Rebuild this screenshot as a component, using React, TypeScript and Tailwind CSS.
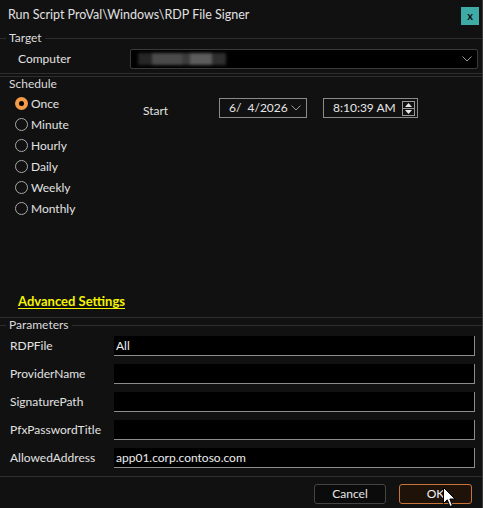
import React from "react";

const font = { fontFamily: 'Lato, "Noto Sans", sans-serif' };

const schedules = ["Once", "Minute", "Hourly", "Daily", "Weekly", "Monthly"];

const params: { label: string; value: string }[] = [
  { label: "RDPFile", value: "All" },
  { label: "ProviderName", value: "" },
  { label: "SignaturePath", value: "" },
  { label: "PfxPasswordTitle", value: "" },
  { label: "AllowedAddress", value: "app01.corp.contoso.com" },
];

// group box caption with the frame line running through it
function GroupHeader({ title, className = "" }: { title: string; className?: string }) {
  return (
    <div className={`flex items-center ${className}`}>
      <div className="w-[6px] h-px bg-[#2e2e2e]" />
      <span className="px-[3px] text-[12px] leading-none text-[#dcdcdc]">{title}</span>
      <div className="flex-1 h-px bg-[#2e2e2e]" />
    </div>
  );
}

// flat combo box arrow
function Chevron({ className = "" }: { className?: string }) {
  return (
    <svg className={className} width="10" height="6" viewBox="0 0 10 6">
      <path d="M0.5 0.5 L5 5 L9.5 0.5" fill="none" stroke="#9c9c9c" strokeWidth="1" />
    </svg>
  );
}

function Radio({ label, checked }: { label: string; checked?: boolean }) {
  return (
    <div className="h-[21px] flex items-center gap-[3px]">
      {checked ? (
        <span className="w-[13px] h-[13px] rounded-full bg-[#f29b48] flex items-center justify-center">
          <span className="w-[5px] h-[5px] rounded-full bg-black" />
        </span>
      ) : (
        <span className="w-[13px] h-[13px] rounded-full border border-[#a8a8a8]" />
      )}
      <span className="text-[12px] text-[#e2e2e2]">{label}</span>
    </div>
  );
}

function Spinner() {
  return (
    <div className="w-[13px] h-[15px] border border-[#9a9a9a] flex flex-col">
      <div className="flex-1 flex items-center justify-center border-b border-[#9a9a9a]">
        <svg width="7" height="4" viewBox="0 0 7 4">
          <path d="M0 4 L3.5 0 L7 4 Z" fill="#e6e6e6" />
        </svg>
      </div>
      <div className="flex-1 flex items-center justify-center">
        <svg width="7" height="4" viewBox="0 0 7 4">
          <path d="M0 0 L3.5 4 L7 0 Z" fill="#e6e6e6" />
        </svg>
      </div>
    </div>
  );
}

function Cursor() {
  return (
    <svg
      className="absolute left-[443px] top-[487px]"
      width="13"
      height="21"
      viewBox="0 0 13 21"
    >
      <path
        d="M0.5 0.5 L0.5 16.5 L4.3 12.8 L7 19.5 L9.4 18.5 L6.8 12 L12 12 Z"
        fill="#ffffff"
        stroke="#000000"
        strokeWidth="1"
        strokeLinejoin="round"
      />
    </svg>
  );
}

export default function App() {
  return (
    <div className="w-[486px] h-[508px] bg-white relative" style={font}>
      <div className="w-[483px] h-[508px] bg-[#111111] border-r border-[#3c3c3c] flex flex-col">
        {/* title bar */}
        <div className="h-[31px] flex items-center justify-between pl-[8px] pr-[3px] shrink-0">
          <span className="text-[12.5px] text-[#e0e0e0]">Run Script ProVal\Windows\RDP File Signer</span>
          <button className="w-[18px] h-[18px] bg-[#3eaba7] flex items-center justify-center text-[11px] font-bold text-[#111] leading-none">
            x
          </button>
        </div>

        {/* target */}
        <GroupHeader title="Target" className="h-[14px]" />
        <div className="mt-[4px] h-[20px] flex items-center">
          <span className="w-[130px] pl-[18px] text-[12px] text-[#e2e2e2]">Computer</span>
          <div className="relative w-[348px] h-[20px] bg-black border border-[#3a3a3a] rounded-[2px] flex items-center">
            <div className="flex items-center h-[12px] ml-[7px] blur-[1.5px]">
              <div className="w-[14px] h-full bg-[#262626]" />
              <div className="w-[30px] h-full bg-[#4a4a4a]" />
              <div className="w-[8px] h-full bg-[#3b3b3b]" />
              <div className="w-[22px] h-full bg-[#5c5c5c]" />
              <div className="w-[14px] h-full bg-[#2e2e2e]" />
            </div>
            <Chevron className="absolute right-[5px]" />
          </div>
        </div>
        <div className="mt-[4px] h-px bg-[#2e2e2e]" />
        <div className="mt-[2px] h-px bg-[#2e2e2e]" />

        {/* schedule */}
        <div className="h-[13px] flex items-center pl-[9px]">
          <span className="text-[12px] leading-none text-[#dcdcdc]">Schedule</span>
        </div>
        <div className="flex flex-col h-[228px] border-b border-[#2e2e2e]">
          <div className="flex">
            <div className="pl-[15px] pt-[3px] w-[143px] flex flex-col">
              {schedules.map((s, i) => (
                <Radio key={s} label={s} checked={i === 0} />
              ))}
            </div>
            <div className="flex items-start pt-[8px]">
              <span className="w-[76px] pt-[4px] text-[12px] text-[#e2e2e2]">Start</span>
              <div className="w-[88px] h-[20px] border border-[#8a8a8a] flex items-center justify-between pl-[9px] pr-[5px]">
                <span className="text-[12px] text-[#e6e6e6] whitespace-pre">6/  4/2026</span>
                <Chevron />
              </div>
              <div className="ml-[16px] w-[95px] h-[20px] border border-[#8a8a8a] flex items-center justify-between pl-[9px] pr-[2px]">
                <span className="text-[12px] text-[#e6e6e6]">8:10:39 AM</span>
                <Spinner />
              </div>
            </div>
          </div>
          <div className="flex-1" />
          <div className="pl-[18px] pb-[5px]">
            <a className="text-[13px] font-bold text-[#f4f400] underline underline-offset-2">Advanced Settings</a>
          </div>
        </div>

        {/* parameters */}
        <GroupHeader title="Parameters" className="h-[14px]" />
        <div className="flex flex-col gap-[8px] mt-[4px]">
          {params.map((p) => (
            <div key={p.label} className="flex items-center h-[20px]">
              <span className="w-[114px] pl-[10px] text-[12px] text-[#e2e2e2]">{p.label}</span>
              <div className="w-[361px] h-[20px] bg-black border-b border-r border-[#8c8c8c] flex items-center px-[2px]">
                <span className="text-[12px] text-[#ededed]">{p.value}</span>
              </div>
            </div>
          ))}
        </div>
        <div className="mt-[8px] h-px bg-[#2e2e2e]" />

        {/* footer */}
        <div className="flex justify-end gap-[13px] pr-[10px] pt-[7px]">
          <button className="w-[72px] h-[20px] rounded-[3px] border border-[#444] bg-[#0b0b0b] text-[12px] text-[#e6e6e6]">
            Cancel
          </button>
          <button className="w-[73px] h-[20px] rounded-[3px] border border-[#c9753a] bg-[#1f1309] text-[12px] text-[#f0f0f0]">
            OK
          </button>
        </div>
      </div>
      <Cursor />
    </div>
  );
}
